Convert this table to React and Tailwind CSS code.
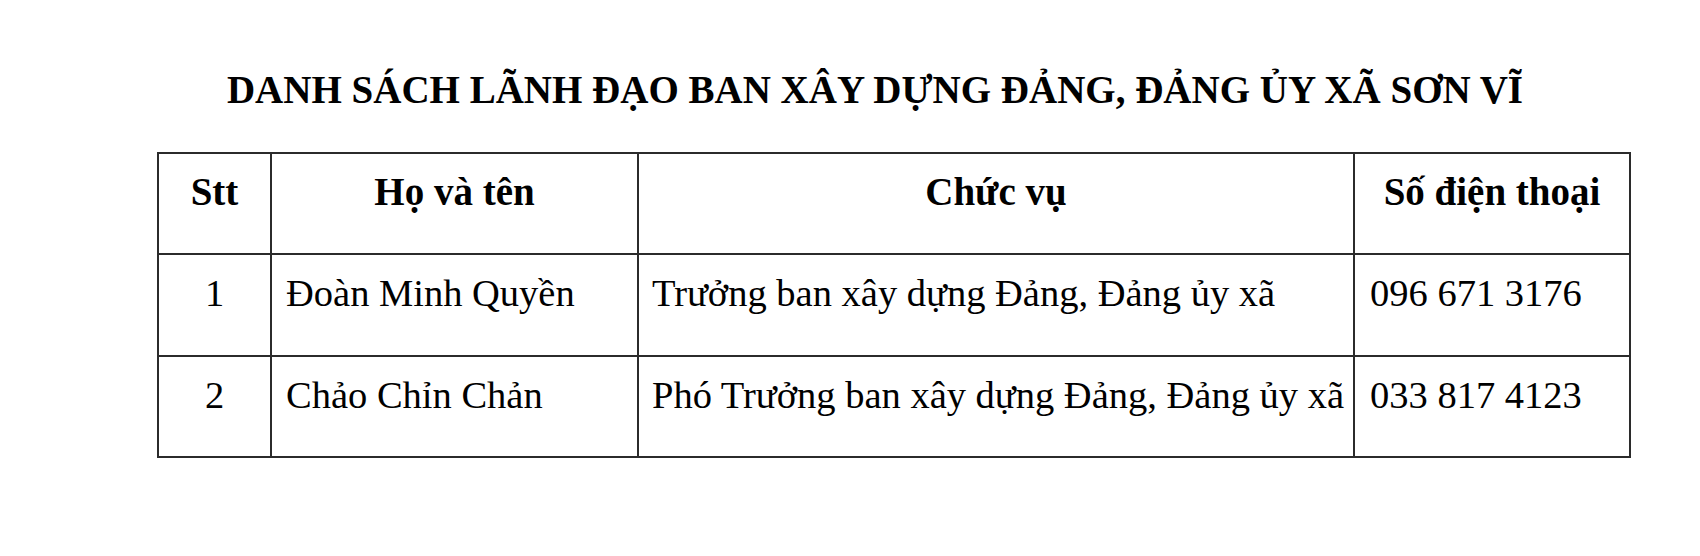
const rows = [
  { stt: '1', name: 'Đoàn Minh Quyền', role: 'Trưởng ban xây dựng Đảng, Đảng ủy xã', phone: '096 671 3176' },
  { stt: '2', name: 'Chảo Chỉn Chản', role: 'Phó Trưởng ban xây dựng Đảng, Đảng ủy xã', phone: '033 817 4123' },
]

export default function App() {
  return (
    <div className="w-[1700px] h-[556px] bg-white text-black font-['Liberation_Serif','Times_New_Roman',serif]">
      <h1 className="pt-[70px] pl-[50px] text-center text-[39px] leading-none font-bold">
        DANH SÁCH LÃNH ĐẠO BAN XÂY DỰNG ĐẢNG, ĐẢNG ỦY XÃ SƠN VĨ
      </h1>

      <div className="ml-[157px] mt-[43px] w-[1474px] border-2 border-[#2b2b2b] grid grid-cols-[113px_367px_716px_274px] text-[38.5px] leading-none">
        {/* header */}
        <div className="h-[101px] border-r-2 border-b-2 border-[#2b2b2b] pt-[18px] text-center text-[39px] font-bold">Stt</div>
        <div className="h-[101px] border-r-2 border-b-2 border-[#2b2b2b] pt-[18px] text-center text-[39px] font-bold">Họ và tên</div>
        <div className="h-[101px] border-r-2 border-b-2 border-[#2b2b2b] pt-[18px] text-center text-[39px] font-bold">Chức vụ</div>
        <div className="h-[101px] border-b-2 border-[#2b2b2b] pt-[18px] text-center text-[39px] font-bold">Số điện thoại</div>

        {rows.map((r, i) => {
          const last = i === rows.length - 1
          const rowCls = last ? 'h-[99px]' : 'h-[102px] border-b-2'
          return [
            <div key={`a${i}`} className={`${rowCls} border-r-2 border-[#2b2b2b] pt-[19px] text-center`}>{r.stt}</div>,
            <div key={`b${i}`} className={`${rowCls} border-r-2 border-[#2b2b2b] pt-[19px] pl-[14px] whitespace-nowrap`}>{r.name}</div>,
            <div key={`c${i}`} className={`${rowCls} border-r-2 border-[#2b2b2b] pt-[19px] pl-[13px] whitespace-nowrap`}>{r.role}</div>,
            <div key={`d${i}`} className={`${rowCls} border-[#2b2b2b] pt-[19px] pl-[15px] whitespace-nowrap`}>{r.phone}</div>,
          ]
        })}
      </div>
    </div>
  )
}
